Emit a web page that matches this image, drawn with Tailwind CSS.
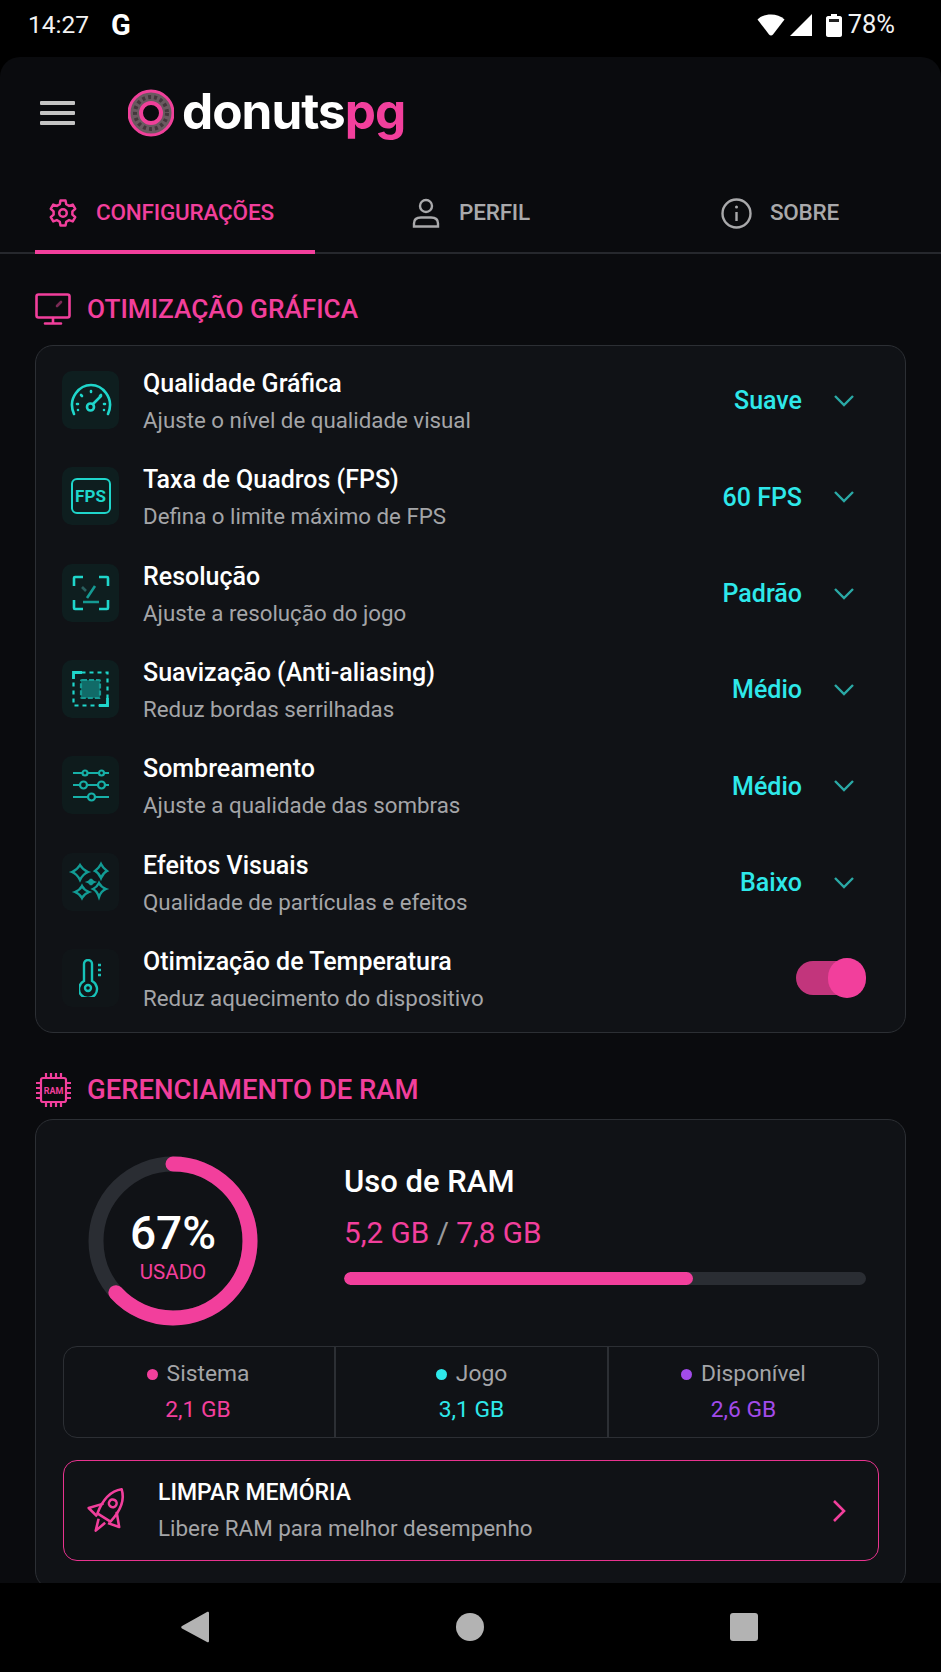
<!DOCTYPE html>
<html lang="pt">
<head>
    <meta charset="UTF-8">
    <title>donutspg</title>
    <script src="https://cdn.jsdelivr.net/npm/@tailwindcss/browser@4"></script>
</head>
<body class="bg-black font-[Roboto,sans-serif] text-white w-[941px] h-[1672px] overflow-hidden flex flex-col">

    <!-- status bar -->
    <div class="h-[57px] shrink-0 flex items-center pl-[28px] pr-[46px] pb-[7px]">
        <span class="text-[24.500px] leading-none text-[#f2f2f2] w-[83px]">14:27</span>
        <span class="text-[29px] leading-none font-bold">G</span>
        <div class="ml-auto flex items-center">
            <svg width="28" height="24" viewBox="0 0 28 24" class="mr-[4px]"><path d="M0.5 6.5C4 3 9 1.5 14 1.5s10 1.500 13.500 5L16 21.500c-1 1.200-3 1.200-4 0z" fill="#fff"/></svg>
            <svg width="24" height="24" viewBox="0 0 24 24" class="mr-[13px]"><path d="M23 1v22H1z" fill="#fff"/></svg>
            <svg width="16" height="24" viewBox="0 0 16 24" class="mr-[6px]"><path d="M5 1h6v2h3c1 0 2 1 2 2v17c0 1-1 2-2 2H2c-1 0-2-1-2-2V5c0-1 1-2 2-2h3z" fill="#fff"/><rect x="3" y="6" width="10" height="3" fill="#222"/></svg>
            <span class="text-[25.500px] leading-none text-[#f2f2f2]">78%</span>
        </div>
    </div>

    <!-- app -->
    <main class="flex-1 min-h-0 overflow-hidden bg-[#0a0b0e] rounded-t-[20px]">
        <header class="h-[119px] flex items-center pl-[40px] pb-[7px]">
            <svg width="36" height="26" viewBox="0 0 36 26" class="mr-[52px]">
                <rect y="1" width="35" height="4" rx="1" fill="#c4c4c4"/>
                <rect y="11" width="35" height="4" rx="1" fill="#c4c4c4"/>
                <rect y="21" width="35" height="4" rx="1" fill="#c4c4c4"/>
            </svg>
            <svg width="46" height="48" viewBox="0 0 46 48" class="mr-[8px]">
                <circle cx="23" cy="24" r="22" fill="#6a5a60" stroke="#f0409a" stroke-width="3"/>
                <circle cx="23" cy="24" r="16" fill="none" stroke="#43383c" stroke-width="4" stroke-dasharray="3 3"/>
                <circle cx="23" cy="24" r="10" fill="#0a0b0e" stroke="#f0409a" stroke-width="4"/>
            </svg>
            <span class="font-[Inter,sans-serif] font-bold text-[49.500px] leading-none tracking-[-1px] pb-[3px]">donuts<span class="text-[#f23f9c]">pg</span></span>
        </header>

        <nav class="h-[78px] flex pl-[35px] border-b-2 border-[#26282d] text-[22.500px] font-medium text-[#a9a9ab]">
            <div class="w-[280px] flex items-center pl-[13px] gap-[18px] text-[#f23f9c] border-b-[4px] border-[#f23f9c] -mb-[2px]">
                <svg width="30" height="32" viewBox="0 0 24 24" fill="none" stroke="#f23f9c" stroke-width="2" stroke-linejoin="round">
                    <circle cx="12" cy="12" r="3"/>
                    <path d="M10 2h4l.6 3 2.300 1.300 2.900-1 2 3.400-2.300 2 0 2.600 2.300 2-2 3.400-2.900-1-2.300 1.300-.6 3h-4l-.6-3-2.300-1.300-2.900 1-2-3.400 2.300-2 0-2.600-2.300-2 2-3.400 2.900 1 2.300-1.300z"/>
                </svg>
                <span class="tracking-[-0.2px]">CONFIGURAÇÕES</span>
            </div>
            <div class="w-[312px] flex items-center justify-center gap-[19px] pb-[2px]">
                <svg width="28" height="30" viewBox="0 0 28 30" fill="none" stroke="#a9a9ab" stroke-width="2.400">
                    <circle cx="14" cy="8" r="6"/>
                    <path d="M2 28.500v-3c0-4 3-6 7-6h10c4 0 7 2 7 6v3z"/>
                </svg>
                <span class="tracking-[-0.2px]">PERFIL</span>
            </div>
            <div class="w-[306px] flex items-center justify-center gap-[18px] pb-[2px]">
                <svg width="31" height="31" viewBox="0 0 31 31" fill="none" stroke="#a9a9ab" stroke-width="2.400">
                    <circle cx="15.500" cy="15.500" r="14"/>
                    <path d="M15.500 14v9"/>
                    <circle cx="15.500" cy="9" r="1.500" fill="#a9a9ab" stroke="none"/>
                </svg>
                <span class="tracking-[-0.2px]">SOBRE</span>
            </div>
        </nav>

        <div class="px-[35px]">
            <!-- otimização -->
            <div class="h-[91px] flex items-center gap-[15px] pt-[19px]">
                <svg width="37" height="32" viewBox="0 0 37 32" fill="none" stroke="#f23f9c" stroke-width="2.600" stroke-linecap="round">
                    <rect x="1.500" y="1.500" width="33" height="23" rx="2"/>
                    <path d="M18 25v5M10 30.500h16"/>
                    <path d="M22 13l4-4" stroke="#7a2a55"/>
                </svg>
                <h2 class="text-[26.200px] leading-none font-medium text-[#f23f9c]">OTIMIZAÇÃO GRÁFICA</h2>
            </div>

            <section class="w-[871px] h-[688px] bg-[#101216] border border-[#2c2f34] rounded-[18px] pt-[6px]">
                <div class="h-[96.300px] flex items-center pl-[26px] pr-[39px]">
                    <div class="w-[57px] h-[58px] rounded-[10px] bg-[#0e1e1f] flex items-center justify-center mr-[24px]">
                        <svg width="42" height="34" viewBox="0 0 42 34" fill="none" stroke="#1fd6cb" stroke-width="2.600" stroke-linecap="round">
                            <path d="M4 31C1 24 1.500 16 6 10 10 4.500 15 2 21 2s11 2.500 15 8c4.500 6 5 14 2 21"/>
                            <path d="M21 8v1M11 12l1 1M31 12l-1 1M7 21h1M35 21h-1M8 27h0M34 27h0"/>
                            <path d="M23 21l8-8"/>
                            <circle cx="20.500" cy="24" r="3.500"/>
                        </svg>
                    </div>
                    <div class="flex-1 pt-[4px]">
                        <p class="text-[25px] leading-[36px] font-medium">Qualidade Gráfica</p>
                        <p class="text-[22.300px] leading-[36px] text-[#a4a5a8]">Ajuste o nível de qualidade visual</p>
                    </div>
                    <span class="text-[25px] font-medium text-[#2ee8ea] pt-[2px]">Suave</span>
                    <svg width="24" height="14" viewBox="0 0 24 14" fill="none" stroke="#2aa9a6" stroke-width="2.400" class="ml-[30px] mr-[10px] mt-[2px]"><path d="M3 2l9 9 9-9"/></svg>
                </div>

                <div class="h-[96.300px] flex items-center pl-[26px] pr-[39px]">
                    <div class="w-[57px] h-[58px] rounded-[10px] bg-[#0e1e1f] flex items-center justify-center mr-[24px]">
                        <div class="w-[40px] h-[36px] rounded-[6px] border-2 border-[#1fd6cb] flex items-center justify-center text-[17px] font-bold text-[#1fd6cb] leading-none">FPS</div>
                    </div>
                    <div class="flex-1 pt-[4px]">
                        <p class="text-[25px] leading-[36px] font-medium">Taxa de Quadros (FPS)</p>
                        <p class="text-[22.300px] leading-[36px] text-[#a4a5a8]">Defina o limite máximo de FPS</p>
                    </div>
                    <span class="text-[25px] font-medium text-[#2ee8ea] pt-[2px]">60 FPS</span>
                    <svg width="24" height="14" viewBox="0 0 24 14" fill="none" stroke="#2aa9a6" stroke-width="2.400" class="ml-[30px] mr-[10px] mt-[2px]"><path d="M3 2l9 9 9-9"/></svg>
                </div>

                <div class="h-[96.300px] flex items-center pl-[26px] pr-[39px]">
                    <div class="w-[57px] h-[58px] rounded-[10px] bg-[#0e1e1f] flex items-center justify-center mr-[24px]">
                        <svg width="38" height="36" viewBox="0 0 38 36" fill="none" stroke="#1fd6cb" stroke-width="2.600">
                            <path d="M2 11V3c0-.6.4-1 1-1h8M27 2h8c.6 0 1 .4 1 1v8M36 25v8c0 .6-.4 1-1 1h-8M11 34H3c-.6 0-1-.4-1-1v-8"/>
                            <path d="M15 23l8-12M11 27h16" stroke="#159a93"/>
                            <path d="M10 12l4 4" stroke="#2a5f5e"/>
                        </svg>
                    </div>
                    <div class="flex-1 pt-[4px]">
                        <p class="text-[25px] leading-[36px] font-medium">Resolução</p>
                        <p class="text-[22.300px] leading-[36px] text-[#a4a5a8]">Ajuste a resolução do jogo</p>
                    </div>
                    <span class="text-[25px] font-medium text-[#2ee8ea] pt-[2px]">Padrão</span>
                    <svg width="24" height="14" viewBox="0 0 24 14" fill="none" stroke="#2aa9a6" stroke-width="2.400" class="ml-[30px] mr-[10px] mt-[2px]"><path d="M3 2l9 9 9-9"/></svg>
                </div>

                <div class="h-[96.300px] flex items-center pl-[26px] pr-[39px]">
                    <div class="w-[57px] h-[58px] rounded-[10px] bg-[#0e1e1f] flex items-center justify-center mr-[24px]">
                        <svg width="38" height="36" viewBox="0 0 38 36" fill="none" stroke="#1fd6cb" stroke-width="2.200">
                            <rect x="1.500" y="1.500" width="34" height="33" stroke-dasharray="4 4"/>
                            <path d="M1.500 8V1.500H10M27 34.500h8.500V27" stroke-width="2.800"/>
                            <rect x="9" y="9" width="19" height="18" rx="1" fill="#116b68" stroke="#159a93" stroke-dasharray="5 2"/>
                        </svg>
                    </div>
                    <div class="flex-1 pt-[4px]">
                        <p class="text-[25px] leading-[36px] font-medium">Suavização (Anti-aliasing)</p>
                        <p class="text-[22.300px] leading-[36px] text-[#a4a5a8]">Reduz bordas serrilhadas</p>
                    </div>
                    <span class="text-[25px] font-medium text-[#2ee8ea] pt-[2px]">Médio</span>
                    <svg width="24" height="14" viewBox="0 0 24 14" fill="none" stroke="#2aa9a6" stroke-width="2.400" class="ml-[30px] mr-[10px] mt-[2px]"><path d="M3 2l9 9 9-9"/></svg>
                </div>

                <div class="h-[96.300px] flex items-center pl-[26px] pr-[39px]">
                    <div class="w-[57px] h-[58px] rounded-[10px] bg-[#0e1b1c] flex items-center justify-center mr-[24px]">
                        <svg width="38" height="36" viewBox="0 0 38 36" fill="none" stroke="#17b0a8" stroke-width="2.200">
                            <path d="M1 6h10M16 6h11M32 6h5M1 18h7M15 18h11M33 18h4M1 30h15M23 30h14"/>
                            <circle cx="13" cy="6" r="2.500"/><circle cx="29.500" cy="6" r="2.500"/>
                            <circle cx="11.500" cy="18" r="3.500"/><circle cx="29.500" cy="18" r="3.500"/>
                            <circle cx="19.500" cy="30" r="3.500"/>
                        </svg>
                    </div>
                    <div class="flex-1 pt-[4px]">
                        <p class="text-[25px] leading-[36px] font-medium">Sombreamento</p>
                        <p class="text-[22.300px] leading-[36px] text-[#a4a5a8]">Ajuste a qualidade das sombras</p>
                    </div>
                    <span class="text-[25px] font-medium text-[#2ee8ea] pt-[2px]">Médio</span>
                    <svg width="24" height="14" viewBox="0 0 24 14" fill="none" stroke="#2aa9a6" stroke-width="2.400" class="ml-[30px] mr-[10px] mt-[2px]"><path d="M3 2l9 9 9-9"/></svg>
                </div>

                <div class="h-[96.300px] flex items-center pl-[26px] pr-[39px]">
                    <div class="w-[57px] h-[58px] rounded-[10px] bg-[#10171a] flex items-center justify-center mr-[24px]">
                        <svg width="57" height="58" viewBox="0 0 57 58" fill="none" stroke="#129c95" stroke-width="2.400">
                            <path d="M18 12Q21 17 26 19 21 21 18 27 15 21 10 19 15 17 18 12Z"/>
                            <path d="M39 11Q41 15 45 18 41 20 39 25 37 20 33 18 37 15 39 11Z"/>
                            <path d="M20 33Q22 37 27 39 22 41 20 45 18 41 13 39 18 37 20 33Z"/>
                            <path d="M37 30Q39 34 44 36 39 38 37 44 35 38 31 36 35 34 37 30Z"/>
                            <path d="M29 26Q29.500 28 32 29 29.500 30 29 32 28.500 30 26 29 28.500 28 29 26Z" fill="#129c95"/>
                        </svg>
                    </div>
                    <div class="flex-1 pt-[4px]">
                        <p class="text-[25px] leading-[36px] font-medium">Efeitos Visuais</p>
                        <p class="text-[22.300px] leading-[36px] text-[#a4a5a8]">Qualidade de partículas e efeitos</p>
                    </div>
                    <span class="text-[25px] font-medium text-[#2ee8ea] pt-[2px]">Baixo</span>
                    <svg width="24" height="14" viewBox="0 0 24 14" fill="none" stroke="#2aa9a6" stroke-width="2.400" class="ml-[30px] mr-[10px] mt-[2px]"><path d="M3 2l9 9 9-9"/></svg>
                </div>

                <div class="h-[96.300px] flex items-center pl-[26px] pr-[39px]">
                    <div class="w-[57px] h-[58px] rounded-[10px] bg-[#101518] flex items-center justify-center mr-[24px]">
                        <svg width="24" height="38" viewBox="0 0 24 38" fill="none" stroke="#17c2b8" stroke-width="2.400">
                            <path d="M5 22V5a4 4 0 0 1 8 0v17a9 9 0 1 1-8 0z"/>
                            <circle cx="9" cy="29" r="3"/>
                            <path d="M19 6h3M19 11h3M19 16h3" stroke-width="2.400"/>
                        </svg>
                    </div>
                    <div class="flex-1 pt-[4px]">
                        <p class="text-[25px] leading-[36px] font-medium">Otimização de Temperatura</p>
                        <p class="text-[22.300px] leading-[36px] text-[#a4a5a8]">Reduz aquecimento do dispositivo</p>
                    </div>
                    <div class="relative w-[70px] h-[40px] flex items-center">
                        <div class="w-[57px] h-[34px] rounded-full bg-[#c2357c]"></div>
                        <div class="absolute right-0 top-0 w-[38px] h-[40px] rounded-full bg-[#f23f9c]"></div>
                    </div>
                </div>
            </section>

            <!-- ram -->
            <div class="h-[86px] flex items-center gap-[15px] pt-[28px]">
                <svg width="37" height="36" viewBox="0 0 37 36" fill="none" stroke="#f23f9c" stroke-width="2.200">
                    <rect x="6" y="6" width="25" height="24" rx="2"/>
                    <path d="M11 1v5M16 1v5M21 1v5M26 1v5M11 30v5M16 30v5M21 30v5M26 30v5M1 11h5M1 16h5M1 21h5M1 26h5M31 11h5M31 16h5M31 21h5M31 26h5"/>
                    <text x="18.500" y="22" font-size="9" font-weight="700" fill="#f23f9c" stroke="none" text-anchor="middle">RAM</text>
                </svg>
                <h2 class="text-[27.500px] leading-none font-medium text-[#f23f9c]">GERENCIAMENTO DE RAM</h2>
            </div>

            <section class="w-[871px] h-[470px] bg-[#101216] border border-[#2c2f34] rounded-[18px] pt-[35px] px-[27px]">
                <div class="flex h-[172px]">
                    <div class="relative w-[170px] h-[172px] ml-[25px] mr-[86px] shrink-0">
                        <svg width="170" height="172" viewBox="0 0 170 172" fill="none" stroke-width="15">
                            <circle cx="85" cy="86" r="77" stroke="#2a2d33"/>
                            <circle cx="85" cy="86" r="77" stroke="#f23f9c" stroke-linecap="round" pathLength="100" stroke-dasharray="63.300 100" transform="rotate(-90 85 86)"/>
                        </svg>
                        <div class="absolute inset-0 flex flex-col items-center justify-center pt-[9px]">
                            <span class="text-[46px] leading-[52px] font-medium">67%</span>
                            <span class="text-[20.500px] leading-[26px] text-[#f23f9c]">USADO</span>
                        </div>
                    </div>
                    <div class="flex-1">
                        <p class="text-[31px] leading-[36px] font-medium mt-[9px]">Uso de RAM</p>
                        <p class="text-[29.700px] leading-[36px] text-[#f23f9c] mt-[15px]">5,2 GB <span class="text-[#9a9a9c]">/</span> 7,8 GB</p>
                        <div class="w-[522px] h-[13px] rounded-full bg-[#2a2d33] mt-[21px] overflow-hidden">
                            <div class="w-[349px] h-full rounded-full bg-[#f23f9c]"></div>
                        </div>
                    </div>
                </div>

                <div class="grid grid-cols-[272px_273px_1fr] h-[92px] mt-[19px] w-[816px] border border-[#2c2f34] rounded-[14px] text-center text-[22.800px]">
                    <div class="border-r-2 border-[#2c2f34] pt-[10px] pr-[2px]">
                        <p class="leading-[34px] text-[#a4a5a8] flex items-center justify-center gap-[9px]"><span class="w-[11px] h-[11px] rounded-full bg-[#f23f9c]"></span>Sistema</p>
                        <p class="leading-[36px] pt-[1px] text-[#f23f9c]">2,1 GB</p>
                    </div>
                    <div class="border-r-2 border-[#2c2f34] pt-[10px]">
                        <p class="leading-[34px] text-[#a4a5a8] flex items-center justify-center gap-[9px]"><span class="w-[11px] h-[11px] rounded-full bg-[#2ee8ea]"></span>Jogo</p>
                        <p class="leading-[36px] pt-[1px] text-[#2ee8ea]">3,1 GB</p>
                    </div>
                    <div class="pt-[10px]">
                        <p class="leading-[34px] text-[#a4a5a8] flex items-center justify-center gap-[9px]"><span class="w-[11px] h-[11px] rounded-full bg-[#a24bea]"></span>Disponível</p>
                        <p class="leading-[36px] pt-[1px] text-[#a24bea]">2,6 GB</p>
                    </div>
                </div>

                <button class="flex items-center w-[816px] h-[101px] mt-[22px] border-[1.500px] border-[#e8338f] rounded-[14px] text-left pl-[24px] pr-[32px]">
                    <svg width="54" height="54" viewBox="0 0 42 42" fill="none" stroke="#f23f9c" stroke-width="2" stroke-linejoin="round" class="mr-[23px] -ml-[7px]">
                        <g transform="rotate(32 21 21)">
                            <path d="M21 1C28 7 29 17 27 27H15C13 17 14 7 21 1Z"/>
                            <path d="M15 18L7 27l9 2M27 18l8 9-9 2"/>
                            <path d="M18 30l3 9 3-9"/>
                            <circle cx="21" cy="14" r="3"/>
                        </g>
                    </svg>
                    <div class="flex-1">
                        <p class="text-[23px] leading-[34px] font-medium">LIMPAR MEMÓRIA</p>
                        <p class="text-[22.400px] leading-[36px] text-[#a4a5a8]">Libere RAM para melhor desempenho</p>
                    </div>
                    <svg width="14" height="24" viewBox="0 0 14 24" fill="none" stroke="#f23f9c" stroke-width="2.600"><path d="M2 2l10 10-10 10"/></svg>
                </button>
            </section>
        </div>
    </main>

    <!-- nav bar -->
    <div class="h-[89px] shrink-0 bg-black flex items-center pb-[2px] pl-[181px]">
        <svg width="28" height="32" viewBox="0 0 28 32" class="mr-[247px]"><path d="M26 1c1-.6 2 0 2 1v28c0 1-1 1.600-2 1L1 17.500c-1-.6-1-2 0-2.600z" fill="#b3b3b3"/></svg>
        <div class="w-[28px] h-[28px] rounded-full bg-[#b3b3b3] mr-[246px]"></div>
        <div class="w-[28px] h-[28px] rounded-[3px] bg-[#b3b3b3]"></div>
    </div>
</body>
</html>
